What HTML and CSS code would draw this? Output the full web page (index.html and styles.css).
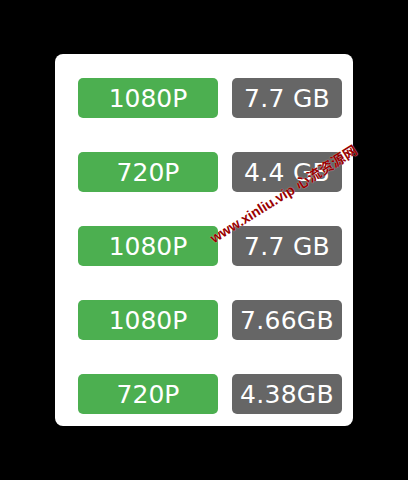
FILE: index.html
```html
<!DOCTYPE html>
<html lang="zh">
<head>
<meta charset="utf-8">
<link rel="stylesheet" href="styles.css">
</head>
<body>
<div class="card">
  <div class="row"><span class="res">1080P</span><span class="size">7.7 GB</span></div>
  <div class="row"><span class="res">720P</span><span class="size">4.4 GB</span></div>
  <div class="row"><span class="res">1080P</span><span class="size">7.7 GB</span></div>
  <div class="row"><span class="res">1080P</span><span class="size">7.66GB</span></div>
  <div class="row"><span class="res">720P</span><span class="size">4.38GB</span></div>
  <div class="watermark">www.xinliu.vip 心流资源网</div>
</div>
</body>
</html>
```
FILE: styles.css
```css
html, body {
  margin: 0;
  padding: 0;
}
body {
  background: #000;
  height: 100vh;
  display: flex;
  align-items: center;
  justify-content: center;
  font-family: "DejaVu Sans", "Noto Sans CJK SC", sans-serif;
}
.card {
  position: relative;
  width: 298px;
  height: 372px;
  box-sizing: border-box;
  background: #fff;
  border-radius: 8px;
  padding: 24px 11px 12px 23px;
  display: flex;
  flex-direction: column;
  gap: 34px;
}
.row {
  display: flex;
  gap: 14px;
}
.res, .size {
  height: 40px;
  border-radius: 5px;
  color: #fff;
  display: flex;
  align-items: center;
  justify-content: center;
  font-size: 25px;
  white-space: nowrap;
}
.res {
  width: 140px;
  background: #4caf50;
}
.size {
  width: 110px;
  background: #666;
  letter-spacing: 0.3px;
}
.watermark {
  position: absolute;
  left: 161px;
  top: 176px;
  line-height: 17px;
  transform: rotate(-32deg);
  transform-origin: left bottom;
  color: #9a0000;
  font-family: "Liberation Sans", "Noto Sans CJK SC", sans-serif;
  font-weight: bold;
  font-size: 14px;
  white-space: nowrap;
  text-shadow: 0 0 1px rgba(255, 255, 255, 0.8);
}
```
